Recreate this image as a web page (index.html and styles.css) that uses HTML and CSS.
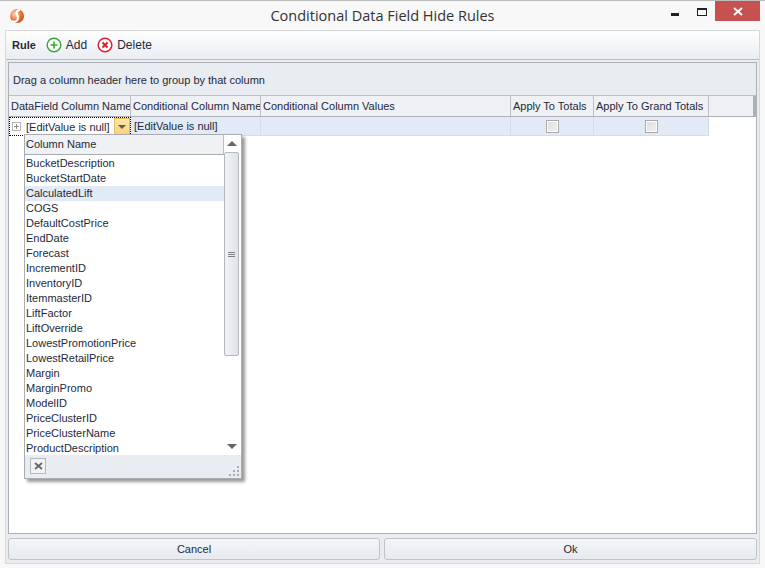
FILE: index.html
```html
<!DOCTYPE html>
<html lang="en">

<head>
    <meta charset="UTF-8">
    <title>Conditional Data Field Hide Rules</title>
    <link rel="stylesheet" href="styles.css">
</head>

<body>
    <div class="window">
        <div class="titlebar">
            <svg class="logo" width="16" height="18" viewBox="0 0 16 18">
                <defs>
                    <radialGradient id="ball" cx="0.35" cy="0.35" r="0.75">
                        <stop offset="0" stop-color="#f6d5bb"/>
                        <stop offset="0.6" stop-color="#e8743a"/>
                        <stop offset="1" stop-color="#c9421c"/>
                    </radialGradient>
                </defs>
                <circle cx="8" cy="9" r="7" fill="url(#ball)"/>
                <path d="M11 3C8 3 7 5 8 7.500S10 11 8 13.500C6.500 15 4.500 15 3 14" fill="none" stroke="#fff" stroke-width="2.200"/>
            </svg>
            <div class="title">Conditional Data Field Hide Rules</div>
            <div class="winbtns">
                <div class="btn-min"></div>
                <div class="btn-max"></div>
                <div class="btn-close">
                    <svg width="10" height="9" viewBox="0 0 10 9"><path d="M1 1L9 8M9 1L1 8" stroke="#fff" stroke-width="2"/></svg>
                </div>
            </div>
        </div>

        <div class="panel">
            <div class="toolbar">
                <span class="tb-label">Rule</span>
                <span class="tb-item">
                    <svg width="16" height="16" viewBox="0 0 16 16"><circle cx="8" cy="8" r="6.800" fill="#fff" stroke="#3aa635" stroke-width="1.400"/><path d="M8 4.500V11.500M4.500 8H11.500" stroke="#3aa635" stroke-width="1.600"/></svg>
                    Add
                </span>
                <span class="tb-item">
                    <svg width="16" height="16" viewBox="0 0 16 16"><circle cx="8" cy="8" r="6.800" fill="#fff" stroke="#e0202c" stroke-width="1.500"/><path d="M5.500 5.500L10.500 10.500M10.500 5.500L5.500 10.500" stroke="#e0202c" stroke-width="2"/></svg>
                    Delete
                </span>
            </div>

            <div class="grid">
                <div class="grouppanel">Drag a column header here to group by that column</div>
                <div class="headrow">
                    <div class="hcell col1">DataField Column Name</div>
                    <div class="hcell col2">Conditional Column Name</div>
                    <div class="hcell col3">Conditional Column Values</div>
                    <div class="hcell col4">Apply To Totals</div>
                    <div class="hcell col5">Apply To Grand Totals</div>
                    <div class="hcell col6"></div>
                </div>
                <div class="datarow">
                    <div class="dcell col1 editing">
                        <span class="expander"></span>
                        <span class="edit-text">[EditValue is null]</span>
                        <span class="dropbtn"></span>
                    </div>
                    <div class="dcell col2">[EditValue is null]</div>
                    <div class="dcell col3"></div>
                    <div class="dcell col4 center"><span class="check"></span></div>
                    <div class="dcell col5 center"><span class="check"></span></div>
                </div>
            </div>

            <div class="buttons">
                <div class="button">Cancel</div>
                <div class="button">Ok</div>
            </div>

            <div class="popup">
                <div class="popup-main">
                    <div class="popup-left">
                        <div class="popup-head">Column Name</div>
                        <div class="popup-list">
                            <div class="item">BucketDescription</div>
                            <div class="item">BucketStartDate</div>
                            <div class="item hot">CalculatedLift</div>
                            <div class="item">COGS</div>
                            <div class="item">DefaultCostPrice</div>
                            <div class="item">EndDate</div>
                            <div class="item">Forecast</div>
                            <div class="item">IncrementID</div>
                            <div class="item">InventoryID</div>
                            <div class="item">ItemmasterID</div>
                            <div class="item">LiftFactor</div>
                            <div class="item">LiftOverride</div>
                            <div class="item">LowestPromotionPrice</div>
                            <div class="item">LowestRetailPrice</div>
                            <div class="item">Margin</div>
                            <div class="item">MarginPromo</div>
                            <div class="item">ModelID</div>
                            <div class="item">PriceClusterID</div>
                            <div class="item">PriceClusterName</div>
                            <div class="item">ProductDescription</div>
                        </div>
                    </div>
                    <div class="scrollbar">
                        <div class="arrow-up"></div>
                        <div class="thumb"><span class="grip"></span></div>
                        <div class="arrow-down"></div>
                    </div>
                </div>
                <div class="popup-foot">
                    <div class="closebtn">
                        <svg width="9" height="8" viewBox="0 0 9 8"><path d="M1 1L8 7M8 1L1 7" stroke="#666" stroke-width="1.800"/></svg>
                    </div>
                    <svg class="sizer" width="10" height="10" viewBox="0 0 10 10"><path d="M8 0h2v2H8zM4 4h2v2H4zM8 4h2v2H8zM0 8h2v2H0zM4 8h2v2H4zM8 8h2v2H8z" fill="#a9adb3"/></svg>
                </div>
            </div>
        </div>
    </div>
</body>

</html>
```

FILE: styles.css
```css
* {
    box-sizing: border-box;
}

html,
body {
    margin: 0;
    height: 100%;
}

body {
    font-family: "Liberation Sans", Arial, sans-serif;
    font-size: 11px;
    color: #1e2a3a;
    background: #f8f8f8;
}

.window {
    width: 765px;
    height: 568px;
    border-top: 1px solid #bdbdbd;
    display: flex;
    flex-direction: column;
    padding: 0 5px 4px 5px;
}

/* title bar */
.titlebar {
    height: 29px;
    flex: none;
    position: relative;
    display: flex;
    justify-content: center;
    padding-top: 6px;
    margin: 0 -5px;
}

.logo {
    position: absolute;
    left: 9px;
    top: 6px;
}

.title {
    font-family: "Open Sans", sans-serif;
    font-size: 14.500px;
    line-height: 18px;
    color: #333;
}

.winbtns {
    position: absolute;
    right: 5px;
    top: 0;
    display: flex;
}

.btn-min {
    width: 8px;
    height: 3px;
    background: #222;
    margin: 12px 18px 0 0;
}

.btn-max {
    width: 10px;
    height: 8px;
    border: 1px solid #222;
    border-top-width: 2px;
    margin: 7px 8px 0 0;
}

.btn-close {
    width: 45px;
    height: 20px;
    background: #c75050;
    display: flex;
    align-items: center;
    justify-content: center;
}

/* main panel */
.panel {
    flex: 1;
    position: relative;
    display: flex;
    flex-direction: column;
    background: #e9ecf1;
    border: 1px solid #d6d8db;
    min-height: 0;
}

.toolbar {
    height: 29px;
    flex: none;
    display: flex;
    align-items: center;
    padding-left: 6px;
    background: linear-gradient(#ffffff, #e9ecf1);
    border-bottom: 1px solid #b9bcc2;
}

.tb-label {
    font-weight: bold;
    margin-right: 10px;
}

.tb-item {
    display: flex;
    align-items: center;
    gap: 4px;
    font-size: 12px;
    margin-right: 10px;
}

/* grid */
.grid {
    flex: 1;
    margin: 2px 2px 0 2px;
    border: 1px solid #acb0b7;
    background: #fff;
    min-height: 0;
}

.grouppanel {
    height: 33px;
    line-height: 35px;
    padding-left: 4px;
    background: #e9ecf1;
    border-bottom: 1px solid #bcc0c6;
}

.headrow {
    height: 21px;
    display: flex;
    background: #eff1f5;
    border-bottom: 1px solid #acb0b7;
}

.hcell {
    line-height: 20px;
    padding-left: 2px;
    border-right: 1px solid #bcc0c6;
    white-space: nowrap;
    overflow: hidden;
}

.hcell.col6 {
    border-right: 3px solid #acb0b7;
}

.col1 {
    width: 122px;
    flex: none;
}

.col2 {
    width: 130px;
    flex: none;
}

.col3 {
    width: 250px;
    flex: none;
}

.col4 {
    width: 83px;
    flex: none;
}

.col5 {
    width: 115px;
    flex: none;
}

.col6 {
    flex: 1;
}

.datarow {
    height: 19px;
    display: flex;
}

.dcell {
    background: #e1eaf6;
    border-right: 1px solid #d5dde8;
    border-bottom: 1px solid #d5dde8;
    line-height: 18px;
    padding-left: 3px;
    white-space: nowrap;
}

.center {
    display: flex;
    align-items: center;
    justify-content: center;
    padding-left: 0;
}

.editing {
    background: #fff;
    border: 1px dotted #000;
    display: flex;
    align-items: center;
    padding-left: 1px;
}

.expander {
    width: 9px;
    height: 9px;
    border: 1px solid #b5b5b5;
    margin: 0 5px 0 1px;
    background:
        linear-gradient(#8a8a8a, #8a8a8a) center / 5px 1px no-repeat,
        linear-gradient(#8a8a8a, #8a8a8a) center / 1px 5px no-repeat;
}

.edit-text {
    flex: 1;
}

.dropbtn {
    width: 16px;
    height: 17px;
    position: relative;
    background: linear-gradient(#fde6a8, #fbd27c);
    border: 1px solid #e8b95e;
}

.dropbtn::after {
    content: "";
    position: absolute;
    left: 3px;
    top: 6px;
    border: 4px solid transparent;
    border-top: 4px solid #5a5a5a;
    border-bottom: 0;
}

.check {
    width: 13px;
    height: 13px;
    border: 1px solid #a9a9a9;
    outline: 1px solid #fff;
    outline-offset: -2px;
    background: linear-gradient(135deg, #dcdcdc, #f2f2f2);
}

/* bottom buttons */
.buttons {
    flex: none;
    display: grid;
    grid-template-columns: 372px 1fr;
    gap: 4px;
    padding: 4px 2px 3px 2px;
}

.button {
    height: 22px;
    line-height: 21px;
    text-align: center;
    background: linear-gradient(#f4f6f8, #e6e9ee);
    border: 1px solid #bfc3c9;
    border-radius: 3px;
}

/* lookup popup */
.popup {
    position: absolute;
    left: 18px;
    top: 103px;
    width: 218px;
    height: 345px;
    background: #e9ecf1;
    border: 1px solid #a9adb3;
    box-shadow: 3px 3px 3px rgba(0, 0, 0, 0.4);
    display: flex;
    flex-direction: column;
}

.popup-main {
    height: 320px;
    display: flex;
    background: #fff;
}

.popup-left {
    width: 199px;
    flex: none;
}

.popup-head {
    height: 20px;
    line-height: 18px;
    padding-left: 1px;
    background: #eff1f5;
    border-bottom: 1px solid #a9adb3;
    border-right: 1px solid #bcc0c6;
}

.popup-list {
    padding-top: 1px;
}

.item {
    height: 15px;
    line-height: 15px;
    padding-left: 1px;
    white-space: nowrap;
}

.hot {
    background: #e1eaf6;
}

.scrollbar {
    flex: 1;
    position: relative;
    background: #fff;
    padding-top: 17px;
}

.arrow-up {
    position: absolute;
    left: 3px;
    top: 6px;
    border: 5px solid transparent;
    border-bottom: 5px solid #666;
    border-top: 0;
}

.arrow-down {
    position: absolute;
    left: 3px;
    bottom: 6px;
    border: 5px solid transparent;
    border-top: 5px solid #666;
    border-bottom: 0;
}

.thumb {
    width: 15px;
    height: 204px;
    border: 1px solid #b4b8be;
    border-radius: 2px;
    background: linear-gradient(90deg, #f1f3f6, #dfe2e7);
    display: flex;
    align-items: center;
    justify-content: center;
}

.grip {
    width: 7px;
    height: 5px;
    border-top: 1px solid #7d8187;
    border-bottom: 1px solid #7d8187;
    background: linear-gradient(#7d8187, #7d8187) center / 7px 1px no-repeat;
}

.popup-foot {
    flex: 1;
    position: relative;
    padding: 3px 0 0 5px;
}

.closebtn {
    width: 16px;
    height: 16px;
    border: 1px solid #b4b8be;
    background: #f1f3f6;
    display: flex;
    align-items: center;
    justify-content: center;
}

.sizer {
    position: absolute;
    right: 2px;
    bottom: 2px;
}
```
